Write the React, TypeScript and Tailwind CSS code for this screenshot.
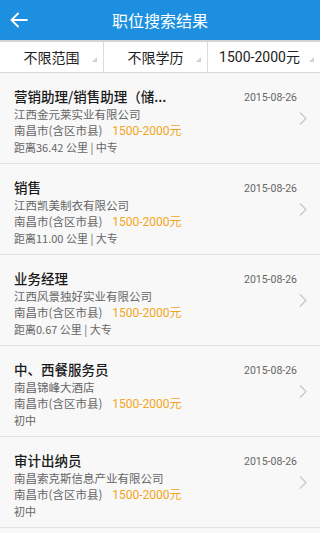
import React from 'react';

type Job = {
  title: string;
  company: string;
  extra: string;
};

const jobs: Job[] = [
  { title: '营销助理/销售助理（储...', company: '江西金元莱实业有限公司', extra: '距离36.42 公里 | 中专' },
  { title: '销售', company: '江西凯美制衣有限公司', extra: '距离11.00 公里 | 大专' },
  { title: '业务经理', company: '江西风景独好实业有限公司', extra: '距离0.67 公里 | 大专' },
  { title: '中、西餐服务员', company: '南昌锦峰大酒店', extra: '初中' },
  { title: '审计出纳员', company: '南昌索克斯信息产业有限公司', extra: '初中' },
];

const font = { fontFamily: '"Noto Sans CJK SC", Roboto, sans-serif' };
const roboto = { fontFamily: 'Roboto, "Noto Sans CJK SC", sans-serif' };

const Corner = () => (
  <svg width="5" height="5" viewBox="0 0 5 5" className="absolute right-[6px] bottom-[10px]">
    <path d="M5 0 L5 5 L0 5 Z" fill="#d0d0d0" />
  </svg>
);

export default function App() {
  return (
    <div className="w-[320px] h-[533px] overflow-hidden bg-[#f8f8f8]" style={font}>
      <header className="h-[40px] bg-[#1d8fe1] flex items-center relative">
        <svg width="20" height="20" viewBox="0 0 20 20" className="ml-[9px]">
          <path d="M18 10 H3 M9 3.5 L2.5 10 L9 16.5" stroke="white" strokeWidth="1.8" fill="none" strokeLinecap="round" />
        </svg>
        <h1 className="absolute inset-x-0 text-center text-white text-[16px] pointer-events-none">职位搜索结果</h1>
      </header>
      <div className="h-[2px] bg-[#d4d4d4]" />
      <div className="h-[31px] bg-white flex border-b border-[#d8d8d8] text-[14px] text-[#222]">
        <div className="relative flex-1 flex items-center justify-center border-r border-[#dcdcdc]">
          不限范围
          <Corner />
        </div>
        <div className="relative flex-1 flex items-center justify-center border-r border-[#dcdcdc]">
          不限学历
          <Corner />
        </div>
        <div className="relative flex-1 flex items-center justify-center pr-[9px]" style={roboto}>
          1500-2000元
          <Corner />
        </div>
      </div>
      <div>
        {jobs.map((job) => (
          <div key={job.title} className="h-[91px] border-b border-[#e4e4e4] flex pl-[14px]">
            <div className="flex-1 flex flex-col pt-[15px]">
              <div className="flex items-start justify-between">
                <span className="text-[13.5px] font-medium text-[#1a1a1a] leading-[16px]">{job.title}</span>
                <span className="text-[10.5px] text-[#666] leading-[16px] mt-[2px]" style={roboto}>2015-08-26</span>
              </div>
              <span className="text-[11.5px] text-[#666] leading-[16px]">{job.company}</span>
              <span className="text-[11.5px] text-[#666] leading-[16px] flex items-baseline">
                南昌市(含区市县)
                <span className="ml-[10px] text-[12px] text-[#f3a51c]" style={roboto}>1500-2000元</span>
              </span>
              <span className="text-[11px] text-[#666] leading-[16px]">{job.extra}</span>
            </div>
            <svg width="8" height="13" viewBox="0 0 8 13" className="self-center ml-[2px] mr-[13px]">
              <path d="M1 0.5 L7 6.5 L1 12.5" stroke="#c4c4c4" strokeWidth="1.1" fill="none" />
            </svg>
          </div>
        ))}
      </div>
    </div>
  );
}
